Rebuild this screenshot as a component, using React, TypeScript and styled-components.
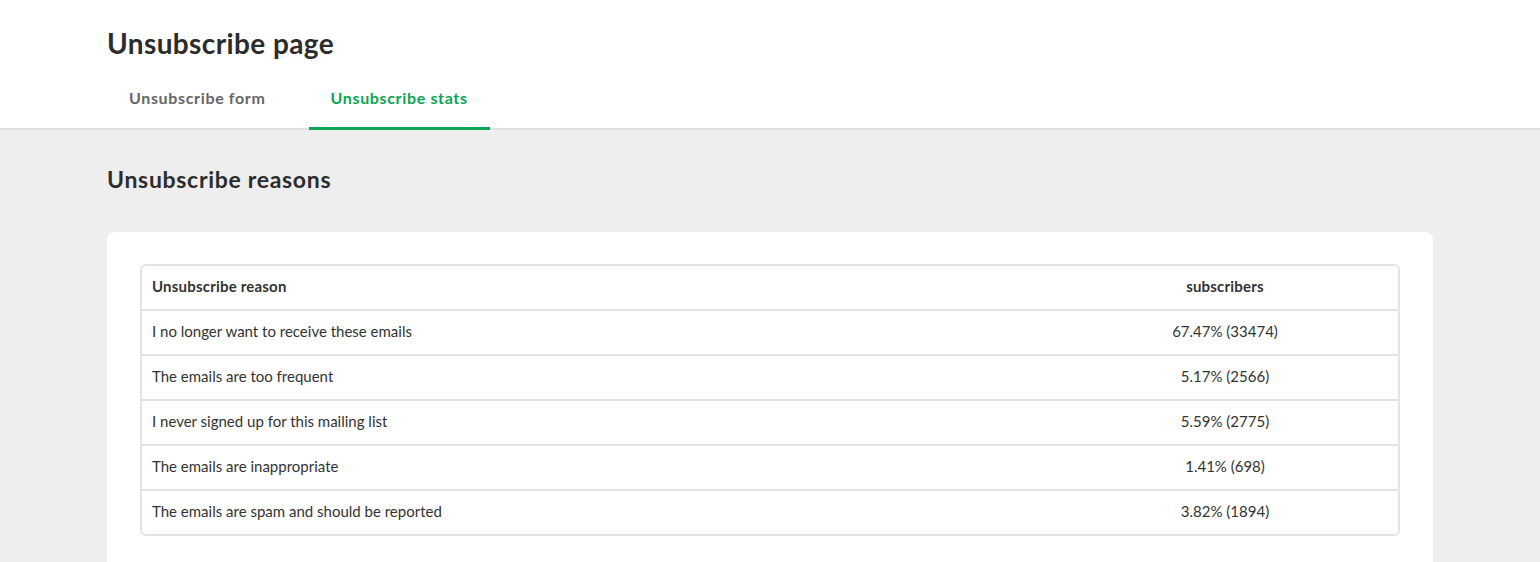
import React from "react";
import styled, { createGlobalStyle } from "styled-components";

const GlobalStyle = createGlobalStyle`
  html, body {
    margin: 0;
    padding: 0;
    background: #eeeeee;
    font-family: Lato, "Open Sans", sans-serif;
    color: #333333;
  }
`;

const Header = styled.header`
  background: #ffffff;
  border-bottom: 2px solid #e2e2e2;
  padding: 0 107px;
`;

const PageTitle = styled.h1`
  margin: 0;
  padding-top: 26px;
  font-size: 28px;
  font-weight: 700;
  letter-spacing: 0.4px;
  line-height: 34px;
  color: #2c2c2c;
`;

const Tabs = styled.nav`
  display: flex;
  gap: 21px;
  margin-top: 19px;
`;

const Tab = styled.div<{ $active?: boolean }>`
  padding: 9px 22px 0;
  height: 51px;
  box-sizing: border-box;
  font-size: 16px;
  font-weight: 700;
  letter-spacing: 0.65px;
  color: ${(p) => (p.$active ? "#09a552" : "#666666")};
  border-bottom: 3px solid ${(p) => (p.$active ? "#09a552" : "transparent")};
  margin-bottom: -2px;
`;

const Main = styled.main`
  padding: 35px 107px 0;
`;

const SectionTitle = styled.h2`
  margin: 0;
  font-size: 23px;
  font-weight: 700;
  letter-spacing: 0.7px;
  line-height: 28px;
  color: #2c2c2c;
`;

const Card = styled.section`
  margin-top: 39px;
  background: #ffffff;
  border-radius: 8px;
  padding: 32px 33px 40px;
`;

const Table = styled.div`
  border: 2px solid #e3e3e3;
  border-radius: 6px;
  overflow: hidden;
`;

const Row = styled.div<{ $head?: boolean }>`
  display: grid;
  grid-template-columns: 1fr 346px;
  height: ${(p) => (p.$head ? "43px" : "45px")};
  align-items: center;
  padding-bottom: 3px;
  font-size: 15px;
  font-weight: ${(p) => (p.$head ? 700 : 400)};
  letter-spacing: ${(p) => (p.$head ? "0.2px" : "0")};
  border-top: ${(p) => (p.$head ? "none" : "2px solid #e3e3e3")};
  box-sizing: border-box;
  color: #333333;
`;

const ReasonCell = styled.div`
  padding-left: 10px;
`;

const CountCell = styled.div`
  text-align: center;
`;

const rows = [
  ["I no longer want to receive these emails", "67.47% (33474)"],
  ["The emails are too frequent", "5.17% (2566)"],
  ["I never signed up for this mailing list", "5.59% (2775)"],
  ["The emails are inappropriate", "1.41% (698)"],
  ["The emails are spam and should be reported", "3.82% (1894)"],
];

export default function App() {
  return (
    <>
      <GlobalStyle />
      <Header>
        <PageTitle>Unsubscribe page</PageTitle>
        <Tabs>
          <Tab>Unsubscribe form</Tab>
          <Tab $active>Unsubscribe stats</Tab>
        </Tabs>
      </Header>
      <Main>
        <SectionTitle>Unsubscribe reasons</SectionTitle>
        <Card>
          <Table>
            <Row $head>
              <ReasonCell>Unsubscribe reason</ReasonCell>
              <CountCell>subscribers</CountCell>
            </Row>
            {rows.map(([reason, count]) => (
              <Row key={reason}>
                <ReasonCell>{reason}</ReasonCell>
                <CountCell>{count}</CountCell>
              </Row>
            ))}
          </Table>
        </Card>
      </Main>
    </>
  );
}
